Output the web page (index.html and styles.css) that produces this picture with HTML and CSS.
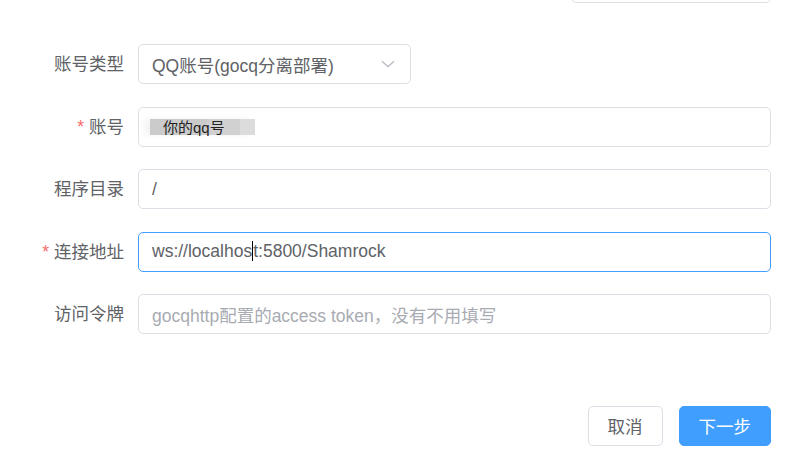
FILE: index.html
```html
<!DOCTYPE html>
<html lang="zh-CN">
<head>
<meta charset="utf-8">
<title>Form</title>
<link rel="stylesheet" href="styles.css">
</head>
<body>
<div class="page">
  <div class="top-row"><div class="top-box"></div></div>
  <form class="form">
    <div class="item">
      <label class="label">账号类型</label>
      <div class="control">
        <div class="select">
          <span class="value">QQ账号(gocq分离部署)</span>
          <svg class="chev" width="14" height="8" viewBox="0 0 14 8"><path d="M1 1.2 L7 6.6 L13 1.2" fill="none" stroke="#b4b7bd" stroke-width="1.2"/></svg>
        </div>
      </div>
    </div>
    <div class="item">
      <label class="label"><span class="req">*</span>账号</label>
      <div class="control">
        <div class="input"><span class="blur"><span class="blur-text">你的qq号</span></span></div>
      </div>
    </div>
    <div class="item">
      <label class="label">程序目录</label>
      <div class="control">
        <div class="input"><span class="value">/</span></div>
      </div>
    </div>
    <div class="item">
      <label class="label"><span class="req">*</span>连接地址</label>
      <div class="control">
        <div class="input focus"><span class="value">ws://localhos<span class="caret"></span>t:5800/Shamrock</span></div>
      </div>
    </div>
    <div class="item">
      <label class="label">访问令牌</label>
      <div class="control">
        <div class="input"><span class="placeholder">gocqhttp配置的access token，没有不用填写</span></div>
      </div>
    </div>
  </form>
  <div class="actions">
    <button class="btn" type="button">取消</button>
    <button class="btn primary" type="button">下一步</button>
  </div>
</div>
</body>
</html>
```
FILE: styles.css
```css
* { box-sizing: border-box; }
html, body { margin: 0; padding: 0; background: #fff; }
body {
  font-family: "Liberation Sans", "Noto Sans CJK SC", sans-serif;
  font-size: 17.5px;
  color: #606266;
}
.page {
  width: 788px;
  height: 460px;
  padding: 0 17px 0 0;
  overflow: hidden;
}
.top-row {
  display: flex;
  justify-content: flex-end;
  margin-top: -37px;
}
.top-box {
  width: 200px;
  height: 40px;
  border: 1px solid #dcdfe6;
  border-radius: 5px;
}
.form {
  margin: 41px 0 0 0;
}
.item {
  display: grid;
  grid-template-columns: 138px 1fr;
  height: 40px;
  margin-bottom: 22.5px;
}
.label {
  text-align: right;
  padding-right: 14px;
  line-height: 40px;
  color: #606266;
}
.req {
  color: #f56c6c;
  margin-right: 5px;
}
.control { display: flex; align-items: center; }
.input, .select {
  height: 40px;
  border: 1px solid #dcdfe6;
  border-radius: 5px;
  display: flex;
  align-items: center;
  padding: 0 14px 0 13px;
  width: 100%;
  background: #fff;
}
.select {
  width: 273px;
  justify-content: space-between;
  padding-right: 15px;
}
.input.focus { border-color: #409eff; }
.value { color: #606266; white-space: nowrap; position: relative; }
.placeholder { color: #a8abb2; white-space: nowrap; }
.caret {
  display: inline-block;
  width: 1px;
  height: 20px;
  background: #000;
  vertical-align: -4px;
}
.blur {
  display: inline-block;
  margin-left: -2px;
  width: 105px;
  height: 16px;
  padding-left: 13px;
  background: linear-gradient(to right, #cbcbcb 0, #cbcbcb 57px, #d1d1d1 57px, #d1d1d1 90px, #dcdcdc 90px);
  box-shadow: -6px 0 6px rgba(240,240,240,0.8);
  line-height: 16px;
}
.blur-text {
  font-size: 15px;
  color: #222;
  font-family: "Liberation Sans", "Noto Sans CJK SC", sans-serif;
}
.actions {
  display: flex;
  justify-content: flex-end;
  gap: 16px;
  margin-top: 71.5px;
}
.btn {
  height: 40px;
  padding: 0 19px;
  border: 1px solid #dcdfe6;
  border-radius: 5px;
  background: #fff;
  color: #606266;
  font-family: "Noto Sans CJK SC", sans-serif;
  font-size: 17.5px;
  line-height: 38px;
}
.btn.primary {
  background: #409eff;
  border-color: #409eff;
  color: #fff;
}
```
